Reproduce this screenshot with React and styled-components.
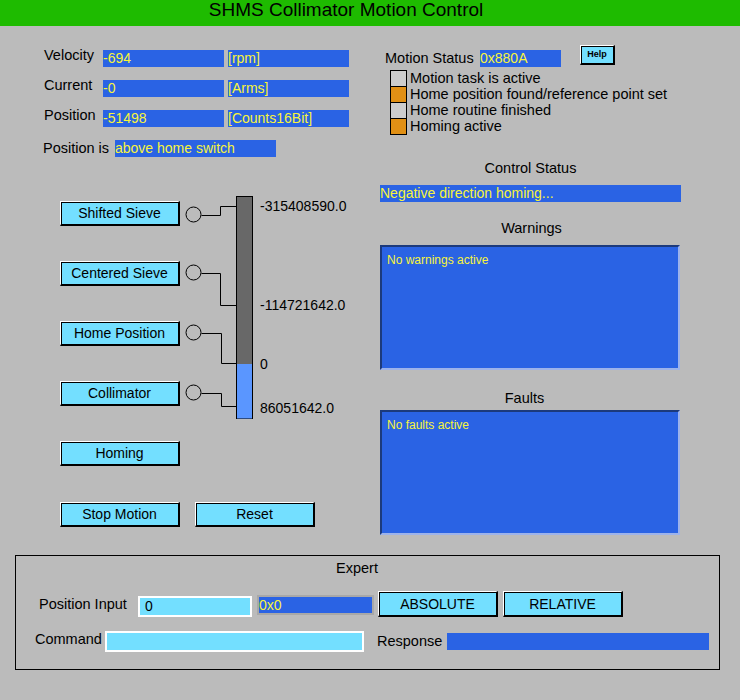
import React from "react";
import styled, { createGlobalStyle } from "styled-components";

const GlobalStyle = createGlobalStyle`
  html, body { margin: 0; padding: 0; background: #bbbbbb; }
  body { font-family: "Liberation Sans", Arial, sans-serif; }
  * { box-sizing: border-box; }
`;

const C = {
  bg: "#bbbbbb",
  green: "#1ebb00",
  blue: "#2a63e4",
  yellow: "#f8f43a",
  cyan: "#73dfff",
  orange: "#e19015",
  lightGray: "#cdcdcd",
};

const Page = styled.div`
  width: 740px;
  height: 700px;
  background: ${C.bg};
  color: #000;
  overflow: hidden;
`;

const TitleBar = styled.div`
  height: 26px;
  background: ${C.green};
  font-size: 19px;
  line-height: 20px;
  text-align: center;
  padding-right: 48px;
  white-space: nowrap;
`;

const Main = styled.div`
  display: grid;
  grid-template-columns: 370px 370px;
  align-items: start;
`;

const Column = styled.div`
  padding-top: 24px;
  display: flex;
  flex-direction: column;
  align-items: flex-start;
`;

const ReadGrid = styled.div`
  margin-left: 44px;
  display: grid;
  grid-template-columns: 55px 121px 121px;
  grid-auto-rows: 17px;
  column-gap: 4px;
  row-gap: 13px;
`;

const Label = styled.div`
  font-size: 14.5px;
  line-height: 17px;
  white-space: nowrap;
  margin-top: ${(p) => p.$dy || 0}px;
  width: ${(p) => (p.$w ? `${p.$w}px` : "auto")};
  margin-left: ${(p) => p.$ml || 0}px;
  flex: none;
`;

const Monitor = styled.div`
  width: ${(p) => p.$w}px;
  height: ${(p) => p.$h || 17}px;
  background: ${C.blue};
  color: ${C.yellow};
  font-size: 14px;
  line-height: ${(p) => p.$h || 17}px;
  white-space: nowrap;
  overflow: hidden;
  margin-left: ${(p) => p.$ml || 0}px;
  margin-top: ${(p) => p.$mt || 0}px;
  flex: none;
`;

const InlineRow = styled.div`
  display: flex;
  align-items: flex-start;
  margin-top: ${(p) => p.$mt || 0}px;
  margin-left: ${(p) => p.$ml || 0}px;
`;

const DiagramRow = styled.div`
  display: flex;
  align-items: flex-start;
  margin-top: 39px;
`;

const ButtonColumn = styled.div`
  margin-left: 60px;
  padding-top: 5px;
  display: flex;
  flex-direction: column;
  gap: 35px;
`;

const Button = styled.button`
  width: ${(p) => p.$w || 120}px;
  height: ${(p) => p.$h || 25}px;
  flex: none;
  margin: 0;
  margin-left: ${(p) => p.$ml || 0}px;
  margin-top: ${(p) => p.$mt || 0}px;
  padding: 0;
  background: ${C.cyan};
  color: #000;
  font-family: "Liberation Sans", Arial, sans-serif;
  font-size: ${(p) => p.$fs || 14}px;
  font-weight: ${(p) => p.$fw || 400};
  line-height: 1;
  text-align: center;
  border-style: solid;
  border-width: 1px 2px 2px 1px;
  border-color: #fff #000 #000 #fff;
  box-shadow: inset 1px 1px 0 #000;
  cursor: pointer;
`;

const BottomButtons = styled.div`
  display: flex;
  gap: 15px;
  margin-left: 60px;
  margin-top: 36px;
`;

const Diagram = styled.svg`
  display: block;
  flex: none;
`;

const IndicatorList = styled.div`
  margin-left: 20px;
  margin-top: 3px;
  display: flex;
  flex-direction: column;
`;

const IndicatorRow = styled.div`
  display: flex;
  align-items: flex-start;
  & + & {
    margin-top: -1px;
  }
`;

const Square = styled.div`
  width: 17px;
  height: 17px;
  border: 1px solid #000;
  background: ${(p) => (p.$on ? C.orange : C.lightGray)};
  flex: none;
`;

const IndicatorText = styled.div`
  margin-left: 3px;
  font-size: 14.5px;
  line-height: 17px;
  white-space: nowrap;
`;

const StatusColumn = styled.div`
  margin-left: 10px;
  width: 301px;
  display: flex;
  flex-direction: column;
`;

const SectionLabel = styled.div`
  font-size: 14.5px;
  line-height: 17px;
  text-align: center;
  margin-top: ${(p) => p.$mt}px;
  padding-right: ${(p) => p.$pr || 0}px;
  padding-left: ${(p) => p.$pl || 0}px;
`;

const MessageBox = styled.div`
  width: 300px;
  height: 125px;
  margin-top: ${(p) => p.$mt}px;
  background: ${C.blue};
  color: ${C.yellow};
  border-style: solid;
  border-width: 2px;
  border-color: #1c3a7c #9db3ea #9db3ea #1c3a7c;
  padding: 6px 5px;
  font-size: 12px;
  line-height: 14px;
`;

const ExpertBox = styled.div`
  margin-top: 20px;
  margin-left: 15px;
  width: 705px;
  height: 115px;
  border: 1px solid #000;
  display: flex;
  flex-direction: column;
`;

const ExpertTitle = styled.div`
  margin-top: 4px;
  font-size: 14.5px;
  line-height: 17px;
  text-align: center;
  padding-right: 21px;
`;

const EntryField = styled.div`
  width: ${(p) => p.$w}px;
  height: 21px;
  flex: none;
  margin-top: ${(p) => p.$mt || 0}px;
  background: ${C.cyan};
  border: 2px solid #fff;
  padding-left: 5px;
  font-size: 14px;
  line-height: 17px;
  color: #000;
`;

const HexField = styled.div`
  width: 117px;
  height: 20px;
  flex: none;
  margin-left: 5px;
  margin-top: 4px;
  background: ${C.blue};
  border: 2px solid #a8a8a8;
  color: ${C.yellow};
  font-size: 14px;
  line-height: 16px;
`;

function ScaleDiagram() {
  const wires = [
    "21.5,19.5 40.5,19.5 40.5,10.5 56,10.5",
    "21.5,77.5 40.5,77.5 40.5,109.5 56,109.5",
    "21.5,137.5 41.5,137.5 41.5,167.5 56,167.5",
    "21.5,197.5 41.5,197.5 41.5,210.5 56,210.5",
  ];
  const circles = [18.5, 76.5, 136.5, 196.5];
  const ticks = [
    { y: 14.7, t: "-315408590.0" },
    { y: 114, t: "-114721642.0" },
    { y: 172.7, t: "0" },
    { y: 217.3, t: "86051642.0" },
  ];
  return (
    <Diagram width="175" height="225" viewBox="0 0 175 225">
      {circles.map((cy) => (
        <circle key={cy} cx="13.5" cy={cy} r="7.5" fill="none" stroke="#000" strokeWidth="1" />
      ))}
      {wires.map((pts) => (
        <polyline key={pts} points={pts} fill="none" stroke="#000" strokeWidth="1" />
      ))}
      <rect x="56.5" y="0.5" width="16" height="222" fill="#686868" stroke="#000" strokeWidth="1" />
      <rect x="57" y="168" width="15" height="54.5" fill="#5a96ff" />
      {ticks.map((k) => (
        <text
          key={k.t}
          x="80"
          y={k.y}
          fontFamily="Liberation Sans, Arial, sans-serif"
          fontSize="14"
          fill="#000"
        >
          {k.t}
        </text>
      ))}
    </Diagram>
  );
}

const readbacks = [
  { label: "Velocity", value: "-694", unit: "[rpm]" },
  { label: "Current", value: "-0", unit: "[Arms]" },
  { label: "Position", value: "-51498", unit: "[Counts16Bit]" },
];

const indicators = [
  { text: "Motion task is active", on: false },
  { text: "Home position found/reference point set", on: true },
  { text: "Home routine finished", on: false },
  { text: "Homing active", on: true },
];

export default function App() {
  return (
    <Page>
      <GlobalStyle />
      <TitleBar>SHMS Collimator Motion Control</TitleBar>
      <Main>
        <Column>
          <ReadGrid>
            {readbacks.map((r) => (
              <React.Fragment key={r.label}>
                <Label $dy={-3}>{r.label}</Label>
                <Monitor $w={121}>{r.value}</Monitor>
                <Monitor $w={121}>{r.unit}</Monitor>
              </React.Fragment>
            ))}
          </ReadGrid>
          <InlineRow $mt={13} $ml={43}>
            <Label $w={72}>Position is</Label>
            <Monitor $w={161}>above home switch</Monitor>
          </InlineRow>
          <DiagramRow>
            <ButtonColumn>
              <Button>Shifted Sieve</Button>
              <Button>Centered Sieve</Button>
              <Button>Home Position</Button>
              <Button>Collimator</Button>
              <Button>Homing</Button>
            </ButtonColumn>
            <ScaleDiagram />
          </DiagramRow>
          <BottomButtons>
            <Button>Stop Motion</Button>
            <Button>Reset</Button>
          </BottomButtons>
        </Column>
        <Column>
          <InlineRow $ml={15}>
            <Label $w={95}>Motion Status</Label>
            <Monitor $w={81}>0x880A</Monitor>
            <Button $w={35} $h={20} $fs={9} $fw={700} $ml={19} $mt={-5}>
              Help
            </Button>
          </InlineRow>
          <IndicatorList>
            {indicators.map((i) => (
              <IndicatorRow key={i.text}>
                <Square $on={i.on} />
                <IndicatorText>{i.text}</IndicatorText>
              </IndicatorRow>
            ))}
          </IndicatorList>
          <StatusColumn>
            <SectionLabel $mt={25}>Control Status</SectionLabel>
            <Monitor $w={301} $mt={8}>Negative direction homing...</Monitor>
            <SectionLabel $mt={18} $pl={2}>Warnings</SectionLabel>
            <MessageBox $mt={8}>No warnings active</MessageBox>
            <SectionLabel $mt={20} $pr={12}>Faults</SectionLabel>
            <MessageBox $mt={3}>No faults active</MessageBox>
          </StatusColumn>
        </Column>
      </Main>
      <ExpertBox>
        <ExpertTitle>Expert</ExpertTitle>
        <InlineRow $mt={14}>
          <Label $w={99} $ml={23} $dy={5}>Position Input</Label>
          <EntryField $w={114} $mt={5}>0</EntryField>
          <HexField>0x0</HexField>
          <Button $h={26} $ml={4}>ABSOLUTE</Button>
          <Button $h={26} $ml={5}>RELATIVE</Button>
        </InlineRow>
        <InlineRow $mt={14}>
          <Label $w={70} $ml={19}>Command</Label>
          <EntryField $w={259} />
          <Label $w={70} $ml={13} $dy={2}>Response</Label>
          <Monitor $w={262} $mt={2} />
        </InlineRow>
      </ExpertBox>
    </Page>
  );
}
